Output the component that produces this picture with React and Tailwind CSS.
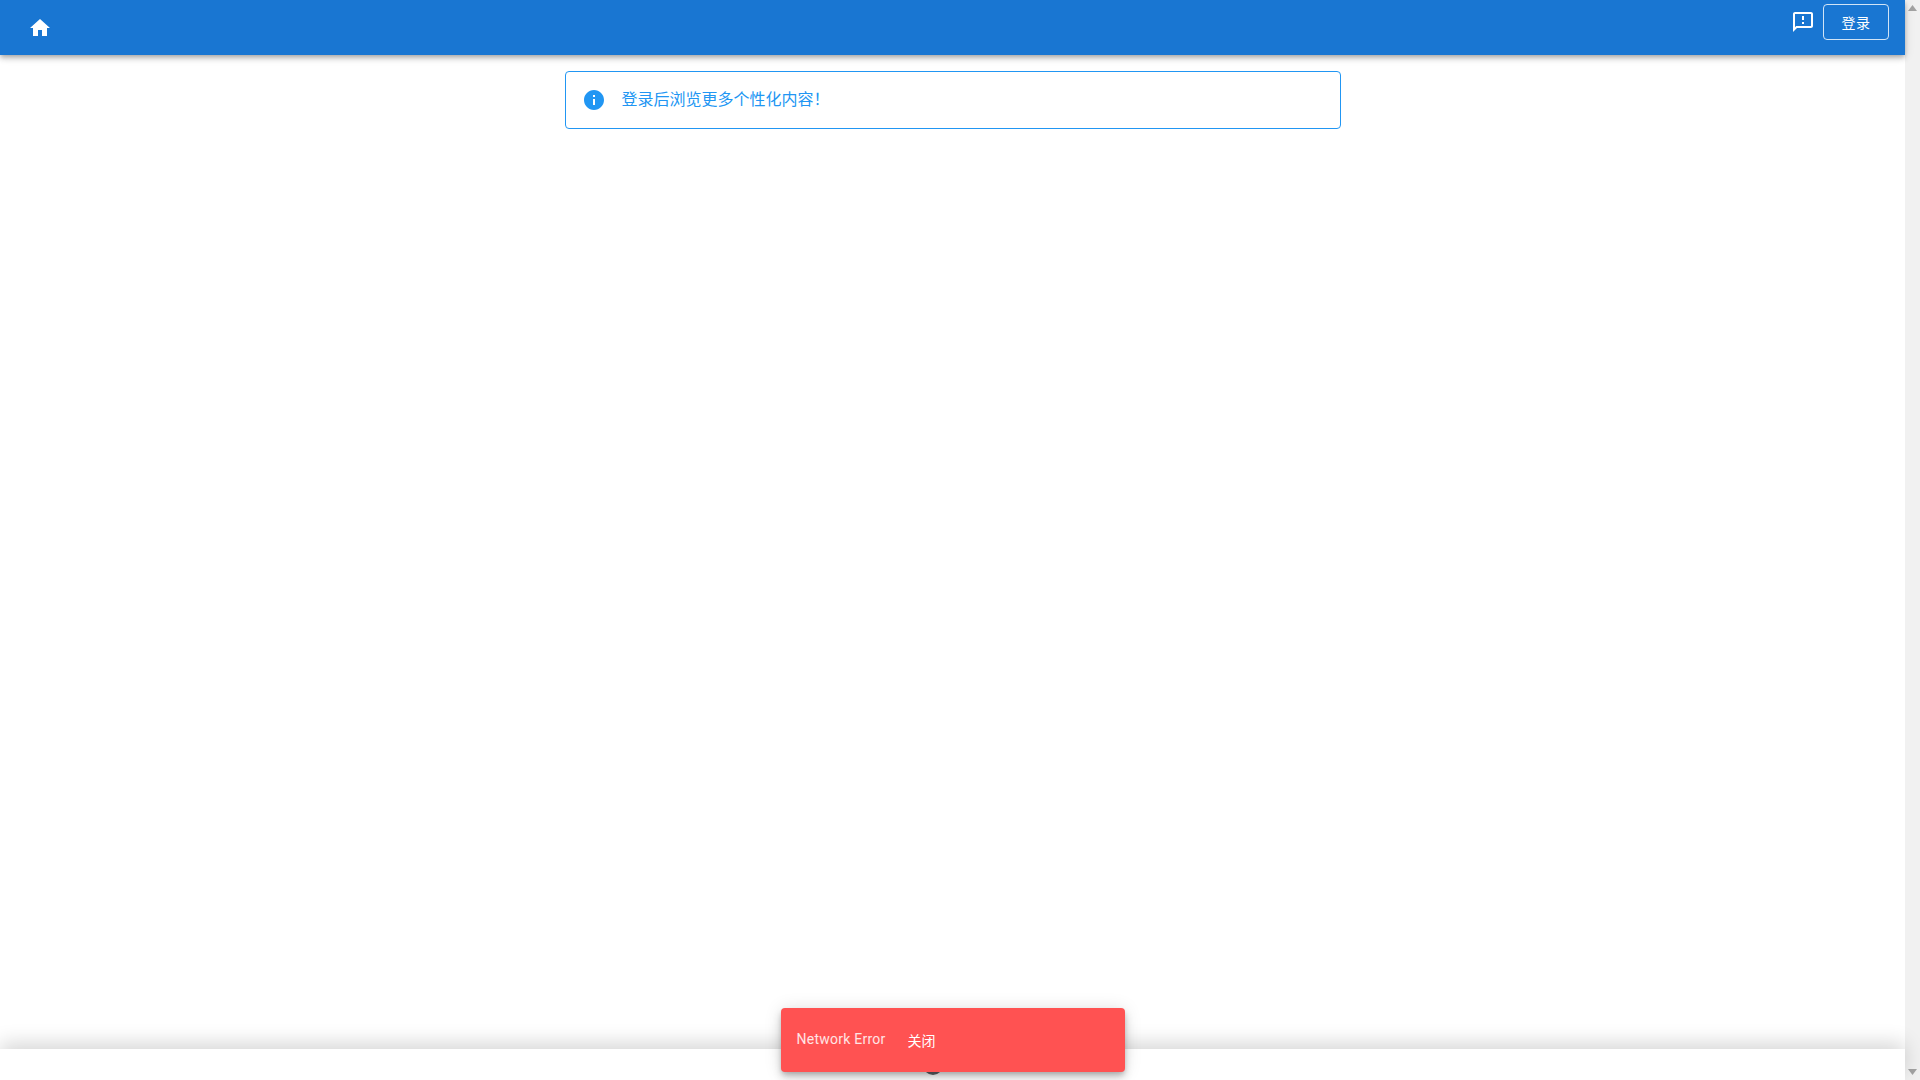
const FONT = "font-['Roboto','Noto_Sans_CJK_SC',sans-serif]";

const App = () => {
  return (
    <div className={`flex h-screen w-full overflow-hidden bg-white ${FONT}`}>
      <div className="relative flex min-w-0 flex-1 flex-col">
        {/* Header */}
        <header className="z-10 flex h-[55px] shrink-0 items-start justify-between bg-[#1976d2] pl-[28px] pr-4 shadow-[0_2px_4px_-1px_rgba(0,0,0,0.2),0_4px_5px_0_rgba(0,0,0,0.14),0_1px_10px_0_rgba(0,0,0,0.12)]">
          <svg className="mt-[16px] h-6 w-6 fill-white" viewBox="0 0 24 24">
            <path d="M10 20v-6h4v6h5v-8h3L12 3 2 12h3v8z" />
          </svg>
          <div className="flex items-start gap-2">
            <svg className="mt-[10px] h-6 w-6 fill-white" viewBox="0 0 24 24">
              <path d="M20 2H4c-1.1 0-1.99.9-1.99 2L2 22l4-4h14c1.1 0 2-.9 2-2V4c0-1.1-.9-2-2-2zm0 14H5.17L4 17.17V4h16v12zM11 12h2v2h-2zm0-6h2v4h-2z" />
            </svg>
            <button className="mt-1 h-[36px] w-[66px] rounded border border-white/80 pt-[2px] text-sm tracking-[0.4px] text-white">
              登录
            </button>
          </div>
        </header>

        {/* Alert */}
        <main className="flex flex-1 justify-center pt-[16px]">
          <div className="flex h-[58px] w-[776px] items-center rounded border border-[#2196f3] px-4 text-base text-[#2196f3]">
            <svg className="mr-[16px] h-6 w-6 fill-[#2196f3]" viewBox="0 0 24 24">
              <path d="M12 2C6.48 2 2 6.48 2 12s4.48 10 10 10 10-4.48 10-10S17.52 2 12 2zm1 15h-2v-6h2v6zm0-8h-2V7h2v2z" />
            </svg>
            <span>登录后浏览更多个性化内容！</span>
          </div>
        </main>

        {/* Bottom nav */}
        <footer className="flex h-[31px] shrink-0 justify-center overflow-hidden bg-white shadow-[0_-6px_20px_0_rgba(0,0,0,0.16)]">
          <div className="mr-[39px] mt-[6px] h-5 w-5 rounded-full bg-[#5f6368]" />
        </footer>

        {/* Snackbar */}
        <div className="absolute bottom-[8px] left-1/2 ml-[0.5px] flex h-[64px] w-[344px] -translate-x-1/2 items-center rounded bg-[#ff5252] pl-[15.5px] pr-4 text-sm shadow-[0_3px_5px_-1px_rgba(0,0,0,0.2),0_6px_10px_0_rgba(0,0,0,0.14),0_1px_18px_0_rgba(0,0,0,0.12)]">
          <span className="mb-[3px] tracking-[0.25px] text-white/85">Network Error</span>
          <span className="ml-[22px] mt-[2px] text-white">关闭</span>
        </div>
      </div>

      {/* Scrollbar */}
      <div className="flex w-[15px] shrink-0 flex-col items-center justify-between bg-[#f1f1f1] py-[5px]">
        <svg className="h-[6px] w-[9px] fill-[#a3a3a3]" viewBox="0 0 9 6">
          <path d="M4.5 0 9 6H0z" />
        </svg>
        <svg className="h-[6px] w-[9px] fill-[#a3a3a3]" viewBox="0 0 9 6">
          <path d="M0 0h9L4.5 6z" />
        </svg>
      </div>
    </div>
  );
};

export default App;
